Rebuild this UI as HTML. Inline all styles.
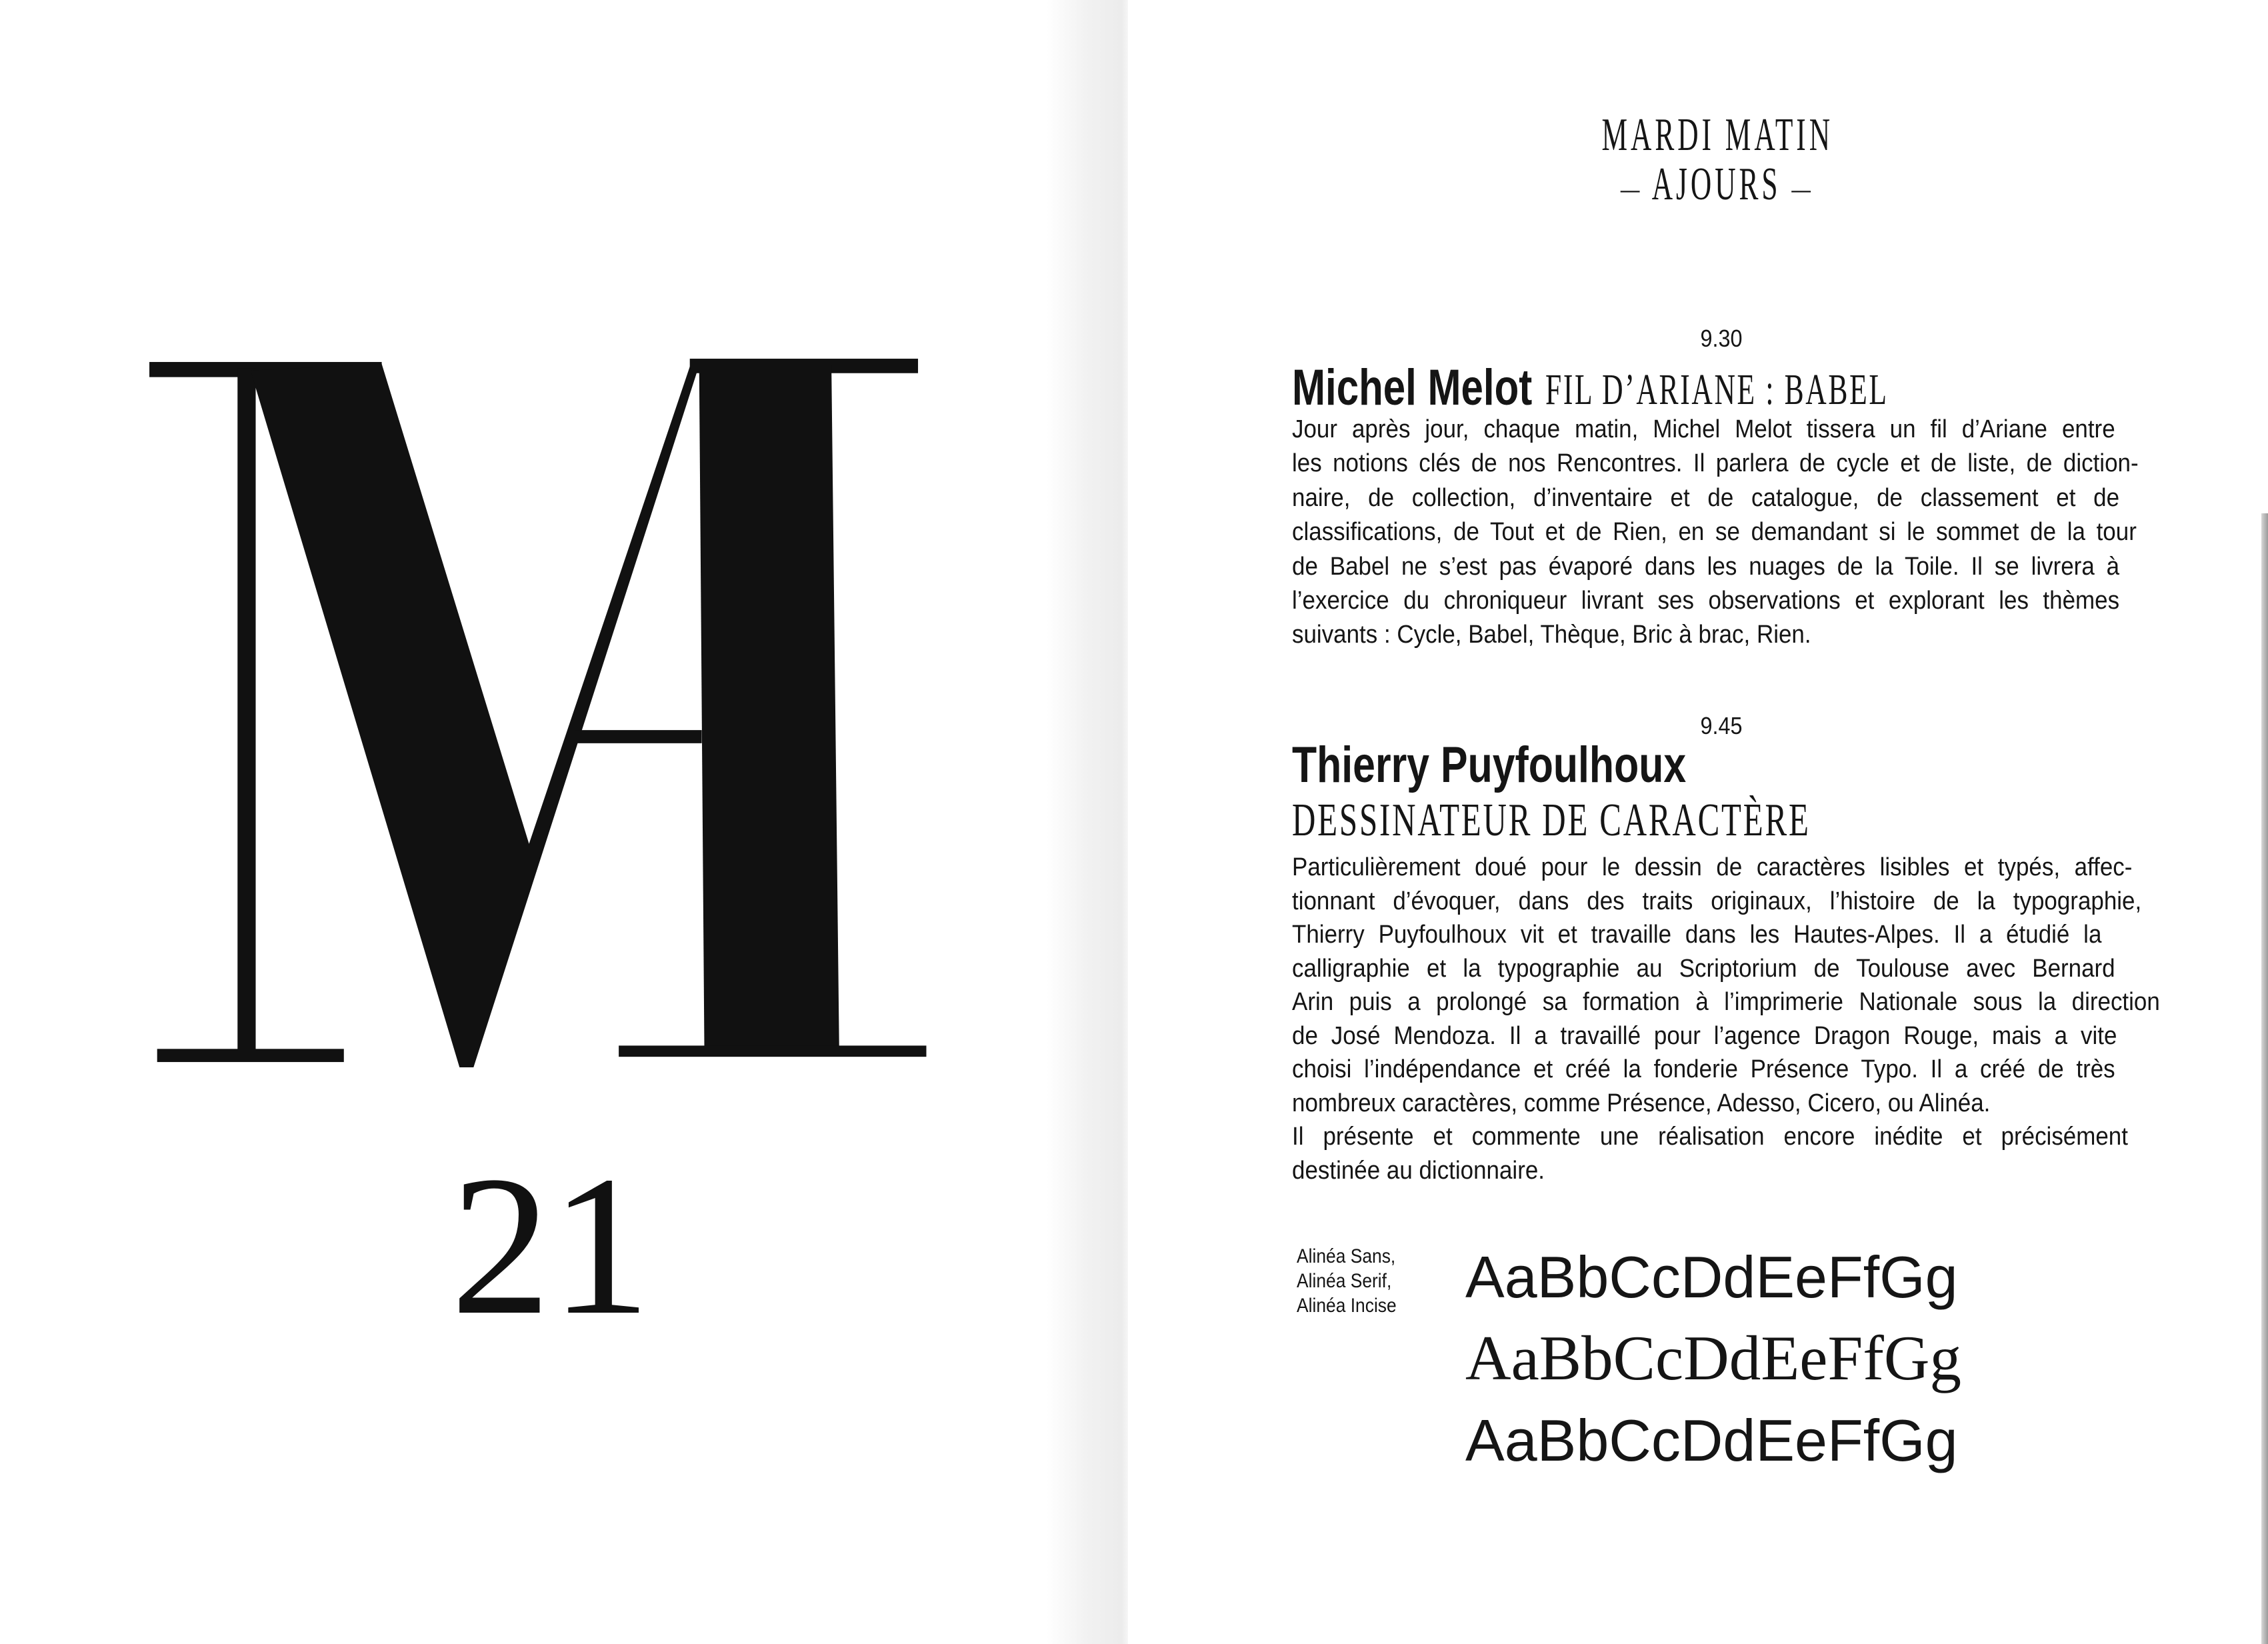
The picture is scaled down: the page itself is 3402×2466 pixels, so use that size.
<!DOCTYPE html>
<html><head><meta charset="utf-8">
<style>
html,body{margin:0;padding:0;}
body{width:3402px;height:2466px;position:relative;background:#fff;overflow:hidden;color:#151515;}
.gut{position:absolute;left:1570px;top:0;width:122px;height:2466px;background:linear-gradient(to right,rgba(238,238,238,0) 0%,rgba(238,238,238,0.8) 50%,#ececec 92%,#f6f6f6 100%);}
.edge{position:absolute;left:3392px;top:770px;width:10px;height:1696px;background:linear-gradient(to right,#d8d8d8,#9a9a9a);}
.a{position:absolute;white-space:nowrap;}
.ser{font-family:"Liberation Serif",serif;}
.sans{font-family:"Liberation Sans",sans-serif;}
.c{position:absolute;left:2576px;width:0;display:flex;justify-content:center;white-space:nowrap;}
.ln{position:absolute;left:1938px;height:51px;line-height:51px;font-family:"Liberation Sans",sans-serif;font-size:38px;transform:scaleX(0.92);transform-origin:0 0;white-space:nowrap;}
.j{text-align:justify;text-align-last:justify;}
</style></head><body>
<div class="gut"></div>
<div class="edge"></div>

<svg width="3402" height="2466" style="position:absolute;left:0;top:0">
<g transform="matrix(0.778,0,0,0.986,200.7,498.6)" fill="#111">
<rect x="30" y="45" width="448" height="23"/>
<rect x="200" y="55" width="35" height="1045"/>
<rect x="45" y="1090" width="360" height="20"/>
<polygon points="225,58 478,48 762,778 1075,45 1092,45 655,1118 628,1118"/>
<rect x="1072" y="40" width="440" height="22"/>
<polygon points="1090,50 1345,50 1360,1090 1100,1090"/>
<rect x="850" y="605" width="245" height="20"/>
<rect x="935" y="1085" width="593" height="17"/>
</g>
</svg>
<div class="a ser" style="left:676px;top:1718px;font-size:300px;line-height:300px;color:#111;">21</div>

<div class="c ser" style="top:168px;font-size:70px;line-height:70px;"><span style="display:inline-block;transform:scaleX(0.62);letter-spacing:8px;">MARDI MATIN</span></div>
<div class="c ser" style="top:242px;font-size:70px;line-height:70px;"><span style="display:inline-block;transform:scaleX(0.62);letter-spacing:8px;"><span style="font-size:46px;vertical-align:middle">—</span> AJOURS <span style="font-size:46px;vertical-align:middle">—</span></span></div>

<div class="c sans" style="left:2582px;top:490px;font-size:36px;line-height:36px;"><span style="display:inline-block;transform:scaleX(0.9)">9.30</span></div>
<div class="a sans" style="left:1938px;top:544px;font-size:76px;line-height:76px;font-weight:bold;transform:scaleX(0.79);transform-origin:0 0;">Michel Melot</div>
<div class="a ser" style="left:2318px;top:552px;font-size:66px;line-height:66px;letter-spacing:4px;transform:scaleX(0.66);transform-origin:0 0;">FIL D’ARIANE : BABEL</div>

<div class="ln j" style="top:619px;width:1342px">Jour après jour, chaque matin, Michel Melot tissera un fil d’Ariane entre</div>
<div class="ln j" style="top:670px;width:1380px">les notions clés de nos Rencontres. Il parlera de cycle et de liste, de diction-</div>
<div class="ln j" style="top:722px;width:1349px">naire, de collection, d’inventaire et de catalogue, de classement et de</div>
<div class="ln j" style="top:773px;width:1377px">classifications, de Tout et de Rien, en se demandant si le sommet de la tour</div>
<div class="ln j" style="top:825px;width:1349px">de Babel ne s’est pas évaporé dans les nuages de la Toile. Il se livrera à</div>
<div class="ln j" style="top:876px;width:1349px">l’exercice du chroniqueur livrant ses observations et explorant les thèmes</div>
<div class="ln" style="top:927px;">suivants : Cycle, Babel, Thèque, Bric à brac, Rien.</div>

<div class="c sans" style="left:2582px;top:1071px;font-size:36px;line-height:36px;"><span style="display:inline-block;transform:scaleX(0.9)">9.45</span></div>
<div class="a sans" style="left:1938px;top:1110px;font-size:76px;line-height:76px;font-weight:bold;transform:scaleX(0.8);transform-origin:0 0;">Thierry Puyfoulhoux</div>
<div class="a ser" style="left:1938px;top:1196px;font-size:70px;line-height:70px;letter-spacing:4px;transform:scaleX(0.7);transform-origin:0 0;">DESSINATEUR DE CARACTÈRE</div>

<div class="ln j" style="top:1276px;width:1370px">Particulièrement doué pour le dessin de caractères lisibles et typés, affec-</div>
<div class="ln j" style="top:1327px;width:1385px">tionnant d’évoquer, dans des traits originaux, l’histoire de la typographie,</div>
<div class="ln j" style="top:1377px;width:1320px">Thierry Puyfoulhoux vit et travaille dans les Hautes-Alpes. Il a étudié la</div>
<div class="ln j" style="top:1428px;width:1342px">calligraphie et la typographie au Scriptorium de Toulouse avec Bernard</div>
<div class="ln j" style="top:1478px;width:1415px">Arin puis a prolongé sa formation à l’imprimerie Nationale sous la direction</div>
<div class="ln j" style="top:1529px;width:1345px">de José Mendoza. Il a travaillé pour l’agence Dragon Rouge, mais a vite</div>
<div class="ln j" style="top:1579px;width:1342px">choisi l’indépendance et créé la fonderie Présence Typo. Il a créé de très</div>
<div class="ln" style="top:1630px;">nombreux caractères, comme Présence, Adesso, Cicero, ou Alinéa.</div>
<div class="ln j" style="top:1680px;width:1363px">Il présente et commente une réalisation encore inédite et précisément</div>
<div class="ln" style="top:1731px;">destinée au dictionnaire.</div>

<div class="a sans" style="left:1945px;top:1866px;font-size:30px;line-height:37px;transform:scaleX(0.88);transform-origin:0 0;">Alinéa Sans,<br>Alinéa Serif,<br>Alinéa Incise</div>

<div class="a sans" style="left:2198px;top:1872px;font-size:88px;line-height:88px;">AaBbCcDdEeFfGg</div>
<div class="a ser" style="left:2198px;top:1991px;font-size:95px;line-height:92px;">AaBbCcDdEeFfGg</div>
<div class="a sans" style="left:2198px;top:2117px;font-size:88px;line-height:88px;">AaBbCcDdEeFfGg</div>
</body></html>
